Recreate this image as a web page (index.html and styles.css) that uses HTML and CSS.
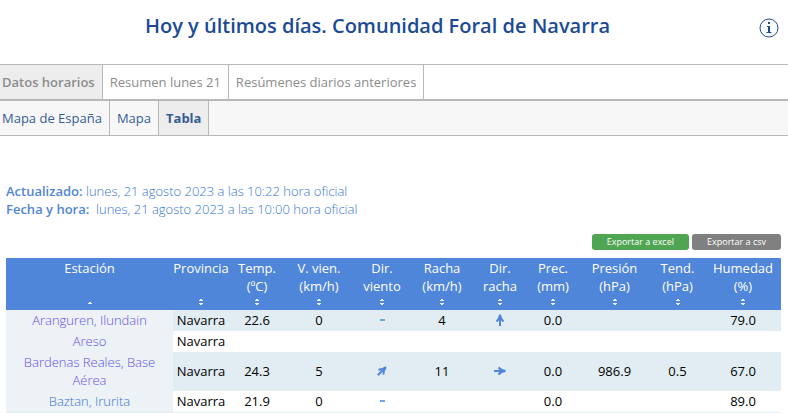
FILE: index.html
```
<!DOCTYPE html>
<html lang="es">
<head>
<meta charset="utf-8">
<title>Hoy y últimos días. Comunidad Foral de Navarra</title>
<link rel="stylesheet" href="styles.css">
</head>
<body>
<svg class="defs" aria-hidden="true">
  <symbol id="sort" viewBox="0 0 6 8"><path d="M2 1H4V2H5V3H1V2H2zM1 5H5V6H4V7H2V6H1z"/></symbol>
  <symbol id="asc" viewBox="0 0 6 8"><path d="M2 4H4V5H5V6H1V5H2z"/></symbol>
  <symbol id="arrow" viewBox="0 0 14 14"><path d="M1 7H12"/><path d="M5.500 3.500Q8 6.500 12.500 7Q8 7.500 5.500 10.500"/></symbol>
</svg>
<header class="head">
  <h1>Hoy y últimos días. Comunidad Foral de Navarra</h1>
  <a class="info" href="#ayuda" aria-label="Información">
    <svg viewBox="0 0 20 20"><circle cx="10" cy="10" r="9"/><path d="M9 4h2v2H9zM8 8H11v6h1.500v1H7.500v-1H9V9H8z"/></svg>
  </a>
</header>
<nav class="tabs">
  <a class="active" href="#horarios">Datos horarios</a>
  <a href="#resumen">Resumen lunes 21</a>
  <a href="#anteriores">Resúmenes diarios anteriores</a>
</nav>
<nav class="tabs sub">
  <a href="#espana">Mapa de España</a>
  <a href="#mapa">Mapa</a>
  <a class="active" href="#tabla">Tabla</a>
</nav>
<main>
  <p class="dates"><b>Actualizado:</b> lunes, 21 agosto 2023 a las 10:22 hora oficial<br><b>Fecha y hora:</b>&nbsp; lunes, 21 agosto 2023 a las 10:00 hora oficial</p>
  <div class="exports">
    <button class="excel" type="button">Exportar a excel</button>
    <button class="csv" type="button">Exportar a csv</button>
  </div>
  <table>
    <colgroup><col class="c-est"><col class="c-prov"><col class="c-temp"><col class="c-vien"><col class="c-dir"><col class="c-racha"><col class="c-dirr"><col class="c-prec"><col class="c-pres"><col class="c-tend"><col class="c-hum"></colgroup>
    <thead>
      <tr>
        <th>Estación<svg><use href="#asc"/></svg></th>
        <th>Provincia<svg><use href="#sort"/></svg></th>
        <th>Temp.<br>(ºC)<svg><use href="#sort"/></svg></th>
        <th>V. vien.<br>(km/h)<svg><use href="#sort"/></svg></th>
        <th>Dir.<br>viento<svg><use href="#sort"/></svg></th>
        <th>Racha<br>(km/h)<svg><use href="#sort"/></svg></th>
        <th>Dir.<br>racha<svg><use href="#sort"/></svg></th>
        <th>Prec.<br>(mm)<svg><use href="#sort"/></svg></th>
        <th>Presión<br>(hPa)<svg><use href="#sort"/></svg></th>
        <th>Tend.<br>(hPa)<svg><use href="#sort"/></svg></th>
        <th>Humedad<br>(%)<svg><use href="#sort"/></svg></th>
      </tr>
    </thead>
    <tbody>
      <tr><td><a class="visited" href="#aranguren">Aranguren, Ilundain</a></td><td>Navarra</td><td>22.6</td><td>0</td><td><i class="calm"></i></td><td>4</td><td><svg class="wind north"><use href="#arrow"/></svg></td><td>0.0</td><td></td><td></td><td>79.0</td></tr>
      <tr><td><a class="visited" href="#areso">Areso</a></td><td>Navarra</td><td></td><td></td><td></td><td></td><td></td><td></td><td></td><td></td><td></td></tr>
      <tr><td><a class="visited" href="#bardenas">Bardenas Reales, Base Aérea</a></td><td>Navarra</td><td>24.3</td><td>5</td><td><svg class="wind northeast"><use href="#arrow"/></svg></td><td>11</td><td><svg class="wind"><use href="#arrow"/></svg></td><td>0.0</td><td>986.9</td><td>0.5</td><td>67.0</td></tr>
      <tr><td><a href="#baztan">Baztan, Irurita</a></td><td>Navarra</td><td>21.9</td><td>0</td><td><i class="calm"></i></td><td></td><td></td><td>0.0</td><td></td><td></td><td>89.0</td></tr>
    </tbody>
  </table>
</main>
</body>
</html>
```
FILE: styles.css
```
* { box-sizing: border-box; }
body {
  margin: 0;
  background: #fff;
  color: #000;
  font: 13px/18px "Open Sans", sans-serif;
}
a { text-decoration: none; }
.defs { position: absolute; width: 0; height: 0; }

.head {
  display: flex;
  align-items: center;
  gap: 4px;
  padding: 12px 9px 24px 0;
}
.head h1 {
  flex: 1;
  margin: 0;
  color: #1c4a94;
  font-size: 20px;
  line-height: 28px;
  font-weight: 600;
  text-align: center;
}
.info { height: 20px; margin-top: 4px; }
.info svg { display: block; width: 20px; height: 20px; fill: #1c4a94; }
.info circle { fill: none; stroke: #1c4a94; }

.tabs {
  display: flex;
  border-top: 1px solid #b8b8b8;
  border-bottom: 1px solid #b8b8b8;
}
.tabs a {
  padding: 8px 7px;
  border-right: 1px solid #b8b8b8;
  color: #8c8c8c;
}
.tabs a:first-child { padding-left: 2px; }
.tabs .active { background: #ededed; font-weight: 600; }
.sub { background: #f7f7f7; }
.tabs.sub a { color: #365c94; }
.tabs.sub .active { font-weight: 700; }

main { padding: 46px 7px 0 6px; }
.dates { margin: 0; color: #3a75d4; font-weight: 300; }
.dates b { color: #4f86d9; font-weight: 600; }
.exports {
  display: flex;
  justify-content: flex-end;
  gap: 3px;
  padding: 16px 0 8px;
}
.exports button {
  height: 16px;
  padding: 0 15px;
  border: 0;
  border-radius: 3px;
  color: #fff;
  font: 9px/16px "Open Sans", sans-serif;
}
.excel { background: #50a553; }
.csv { background: #808080; }

table {
  width: 100%;
  table-layout: fixed;
  border-collapse: collapse;
  border-bottom: 1px solid #e2edf3;
  text-align: center;
}
.c-est { width: 167px; }
.c-prov, .c-temp { width: 56px; }
.c-vien { width: 68px; }
.c-dir { width: 58px; }
.c-racha { width: 62px; }
.c-dirr { width: 54px; }
.c-prec { width: 52px; }
.c-pres { width: 71px; }
.c-tend { width: 55px; }
.c-hum { width: 76px; }
th {
  position: relative;
  height: 52px;
  padding: 1px 0 3px;
  background: #4f86d9;
  color: #fff;
  font-weight: 400;
  vertical-align: top;
}
th svg {
  position: absolute;
  left: calc(50% - 3px);
  bottom: 4px;
  width: 6px;
  height: 8px;
  fill: #e8f0fb;
}
td { padding: 1px 0 2px; }
td:first-child { padding: 1px 12px 2px; font-weight: 300; }
tbody tr:nth-child(odd) { background: #e2edf3; }
tbody td:first-child { background: #ecf2f6; }
td a { color: #3a75d4; }
td .visited { color: #6650ec; }
.calm {
  display: block;
  width: 5px;
  height: 2px;
  margin: 0 auto;
  background: #72a5ea;
}
.wind {
  display: block;
  width: 14px;
  height: 14px;
  margin: 0 auto;
  fill: none;
  stroke: #4f86d9;
  stroke-width: 2;
}
.north { transform: rotate(-90deg); }
.northeast { transform: rotate(-45deg); }
```
